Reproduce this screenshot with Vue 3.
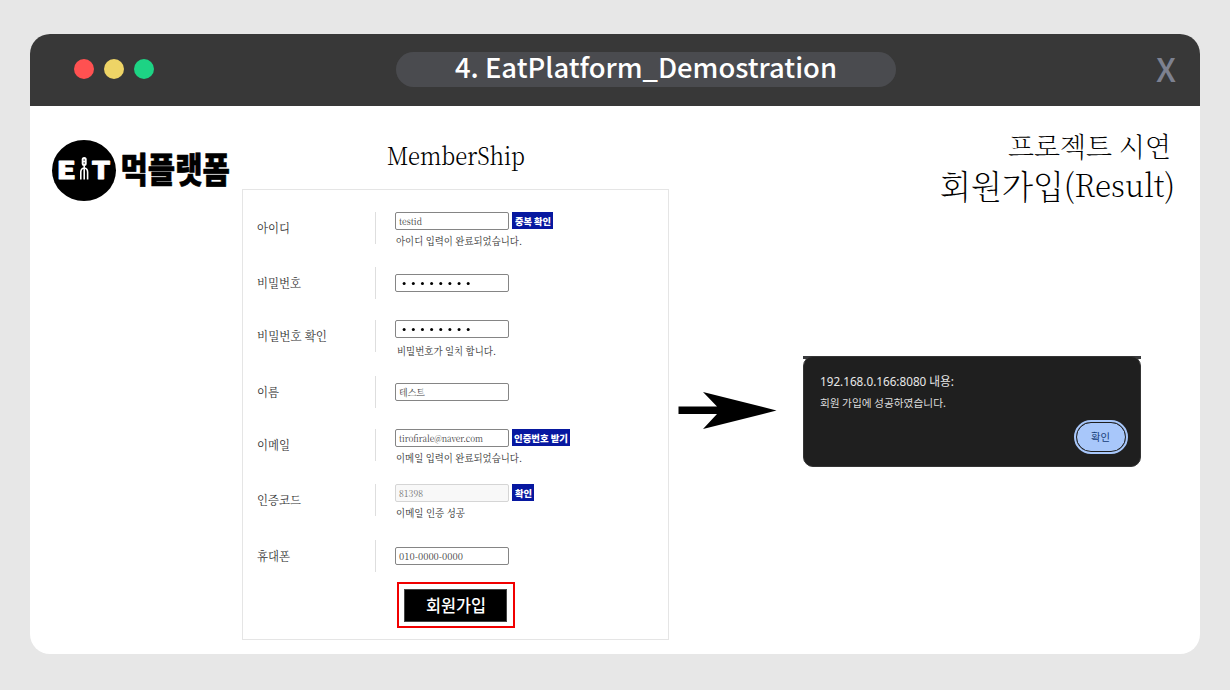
<script setup>
const rows = [
  { label: '아이디', lw: 33, value: 'testid', vw: 23, button: '중복 확인', bw: 41, tw: 36, note: '아이디 입력이 완료되었습니다.', nw: 126 },
  { label: '비밀번호', lw: 44, secret: true },
  { label: '비밀번호 확인', lw: 70, secret: true, note: '비밀번호가 일치 합니다.', nw: 99, low: true },
  { label: '이름', lw: 22, value: '테스트', vw: 26 },
  { label: '이메일', lw: 33, value: 'tirofirale@naver.com', vw: 84, button: '인증번호 받기', bw: 58, tw: 54, note: '이메일 입력이 완료되었습니다.', nw: 126 },
  { label: '인증코드', lw: 44, value: '81398', vw: 24, disabled: true, button: '확인', bw: 22, tw: 17, note: '이메일 인증 성공', nw: 69 },
  { label: '휴대폰', lw: 33, value: '010-0000-0000', vw: 64 },
]
</script>

<template>
  <div class="page">
    <main class="window">
      <header class="titlebar">
        <div class="lights"><i class="red" /><i class="yellow" /><i class="green" /></div>
        <div class="address">
          <svg width="384" height="35"><text x="1" y="26" textLength="382" lengthAdjust="spacingAndGlyphs">4. EatPlatform_Demostration</text></svg>
        </div>
        <svg class="close" width="20" height="26"><text x="0" y="26" textLength="20" lengthAdjust="spacingAndGlyphs">X</text></svg>
      </header>

      <div class="content">
        <svg class="logo" width="180" height="64" viewBox="0 0 180 64">
          <ellipse cx="32" cy="31.500" rx="32" ry="30.500" />
          <g class="brand">
            <text x="4.500" y="40" textLength="19.500" lengthAdjust="spacingAndGlyphs">E</text>
            <text x="39.500" y="40" textLength="19" lengthAdjust="spacingAndGlyphs">T</text>
          </g>
          <rect x="29.700" y="18" width="5" height="9" rx="2.500" fill="#fff" />
          <path d="M32.200 26v14.500M28.800 40.500V33q0-3.500 3.400-4 3.400.5 3.400 4v7.500" fill="none" stroke="#fff" stroke-width="1.600" />
          <path d="M31.400 21h1.600M31.400 24h1.600" stroke="#000" stroke-width=".9" />
          <text class="korean" x="68.500" y="44" textLength="109.500" lengthAdjust="spacingAndGlyphs">먹플랫폼</text>
        </svg>

        <section class="signup">
          <h1><svg width="140" height="36"><text x="0" y="26" textLength="138" lengthAdjust="spacingAndGlyphs">MemberShip</text></svg></h1>
          <form class="card" @submit.prevent>
            <div v-for="row in rows" :key="row.label" class="row">
              <div class="label">
                <svg :width="row.lw + 2" height="18"><text x="0" y="13.500" :textLength="row.lw" lengthAdjust="spacingAndGlyphs">{{ row.label }}</text></svg>
              </div>
              <div class="field" :class="{ single: !row.note }">
                <div class="line">
                  <div class="input" :class="{ disabled: row.disabled }">
                    <svg v-if="row.secret" width="80" height="14"><circle v-for="n in 8" :key="n" :cx="n * 9.150 - 4" cy="7.500" r="1.500" /></svg>
                    <svg v-else :width="row.vw + 2" height="14"><text x="0" y="10.500" :textLength="row.vw" lengthAdjust="spacingAndGlyphs">{{ row.value }}</text></svg>
                  </div>
                  <button v-if="row.button" type="button" :style="{ width: row.bw + 'px' }">
                    <svg :width="row.tw" height="16"><text x="0" y="11.500" :textLength="row.tw" lengthAdjust="spacingAndGlyphs">{{ row.button }}</text></svg>
                  </button>
                </div>
                <svg v-if="row.note" class="note" :class="{ low: row.low }" :width="row.nw + 2" height="16"><text x="0" y="12" :textLength="row.nw" lengthAdjust="spacingAndGlyphs">{{ row.note }}</text></svg>
              </div>
            </div>
            <div class="highlight">
              <button class="submit" type="submit"><svg width="60" height="24"><text x="0" y="18" textLength="60" lengthAdjust="spacingAndGlyphs">회원가입</text></svg></button>
            </div>
          </form>
        </section>

        <svg class="arrow" width="98" height="38" viewBox="0 0 98 38"><path d="M.5 15.500H39L25 1 98.500 19.500 25 38 39 23H.5Z" /></svg>

        <section class="result">
          <svg class="heading" width="240" height="76">
            <text x="74" y="26" font-size="27" textLength="163" lengthAdjust="spacingAndGlyphs">프로젝트 시연</text>
            <text x="6" y="67.500" font-size="33" textLength="124" lengthAdjust="spacingAndGlyphs">회원가입</text>
            <text x="130" y="66" font-size="32" textLength="111" lengthAdjust="spacingAndGlyphs">(Result)</text>
          </svg>
          <div class="backdrop">
            <div class="dialog">
              <svg class="host" width="140" height="18"><text x="0" y="13.500" textLength="134" lengthAdjust="spacingAndGlyphs">192.168.0.166:8080 내용:</text></svg>
              <svg class="message" width="130" height="16"><text x="0" y="13" textLength="126" lengthAdjust="spacingAndGlyphs">회원 가입에 성공하였습니다.</text></svg>
              <button class="ok"><svg width="20" height="16"><text x="0" y="12" textLength="19" lengthAdjust="spacingAndGlyphs">확인</text></svg></button>
            </div>
          </div>
        </section>
      </div>
    </main>
  </div>
</template>

<style>
body { margin: 0; background: #e7e7e7; }
</style>

<style scoped>
* { box-sizing: border-box; }
svg { display: block; flex: none; overflow: visible; }
button { display: flex; align-items: center; justify-content: center; padding: 0; border: 0; }
.page { width: 1230px; height: 690px; padding: 34px 30px 36px; background: #e7e7e7; }
.window { width: 1170px; height: 620px; border-radius: 20px; overflow: hidden; background: #fff; }
.titlebar { height: 72px; display: flex; align-items: center; background: #383838; padding: 0 24px 2px 44px; }
.lights { display: flex; gap: 10px; width: 322px; }
.lights i { width: 20px; height: 20px; border-radius: 50%; }
.red { background: #ff5151; }
.yellow { background: #eed466; }
.green { background: #1dd384; }
.address { width: 500px; height: 35px; border-radius: 18px; background: #4a4b4f; display: flex; justify-content: center; }
.address text { font: 500 27px "Noto Sans CJK KR", sans-serif; fill: #fff; }
.close { margin-left: auto; }
.close text { font: 500 33px "Noto Sans CJK KR", sans-serif; fill: #7d8190; }
.content { display: flex; align-items: flex-start; height: 548px; padding-left: 22px; }
.logo { margin-top: 33px; }
.brand text { font: 900 24px "Noto Sans CJK KR", sans-serif; fill: #fff; stroke: #fff; stroke-width: .8; stroke-linejoin: round; }
.korean { font: 900 35px "Noto Sans CJK KR", sans-serif; stroke: #000; stroke-width: .6; stroke-linejoin: round; }
.signup { width: 427px; margin-left: 10px; }
h1 { margin: 0; height: 83px; padding: 33px 0 0 145px; }
h1 text { font: 300 25px "Noto Serif CJK KR", "Noto Serif KR", "Liberation Serif", serif; fill: #000; }
.card { height: 451px; border: 1px solid #e5e5e5; padding: 22px 14px 0; display: grid; grid-template-rows: 55px 53px 56px 53px 55px 56px 42px 46px; }
.row { display: flex; height: 32px; }
.label { width: 119px; border-right: 1px solid #dedede; display: flex; align-items: center; }
.label text { font: 400 12.5px "Noto Serif CJK KR", "Noto Serif KR", "Noto Sans CJK KR", serif; fill: #333; }
.field { padding-left: 19px; }
.single { display: flex; align-items: center; }
.line { display: flex; gap: 3px; }
.input { width: 114px; height: 18px; border: 1px solid #858585; border-radius: 2px; padding-left: 3px; display: flex; align-items: center; }
.input text { font: 400 9.5px "Noto Serif CJK KR", "Noto Serif KR", "Liberation Serif", serif; fill: #444; }
.disabled { border-color: #d5d5d5; background: #f8f8f8; }
.disabled text { fill: #777; }
.line button { height: 17px; background: #0718a0; }
.line button text { font: 900 9.5px "Noto Sans CJK KR", sans-serif; fill: #fff; }
.note { margin-top: 3px; margin-left: 1px; }
.note.low { margin-top: 5px; margin-left: 2px; }
.note text { font: 400 10.5px "Noto Serif CJK KR", "Noto Serif KR", "Noto Sans CJK KR", serif; fill: #333; }
.highlight { width: 118px; height: 46px; margin-left: 140px; border: 2px solid #f10000; padding: 5px; }
.submit { width: 103px; height: 33px; background: #000; border: 1px solid #444; }
.submit text { font: 500 17px "Noto Sans CJK KR", sans-serif; fill: #fff; }
.arrow { margin: 285px 27px 0 9px; }
.result { width: 370px; }
.heading { margin: 25px 0 0 131px; }
.heading text { font-family: "Noto Serif CJK KR", "Noto Serif KR", "Liberation Serif", serif; font-weight: 200; fill: #000; }
.backdrop { width: 338px; height: 111px; margin-top: 149px; background: linear-gradient(#38393b 3px, #fff 3px); }
.dialog { width: 338px; height: 111px; border-radius: 10px; background: #1f1f1f; border: 1px solid #343434; display: flex; flex-direction: column; padding: 15px 12px 12px 16px; }
.host text { font: 400 12px "Noto Sans", "Noto Sans CJK KR", sans-serif; fill: #e8e8e8; }
.message { margin-top: 4px; }
.message text { font: 400 10.5px "Noto Sans CJK KR", sans-serif; fill: #ddd; }
.ok { width: 50px; height: 30px; margin: 12px 2px 0 auto; border-radius: 15px; background: #a8c7fa; border: 1px solid #1f1f1f; outline: 2px solid #a8c7fa; flex: none; }
.ok text { font: 400 10.5px "Noto Sans CJK KR", sans-serif; fill: #143c78; }
</style>
